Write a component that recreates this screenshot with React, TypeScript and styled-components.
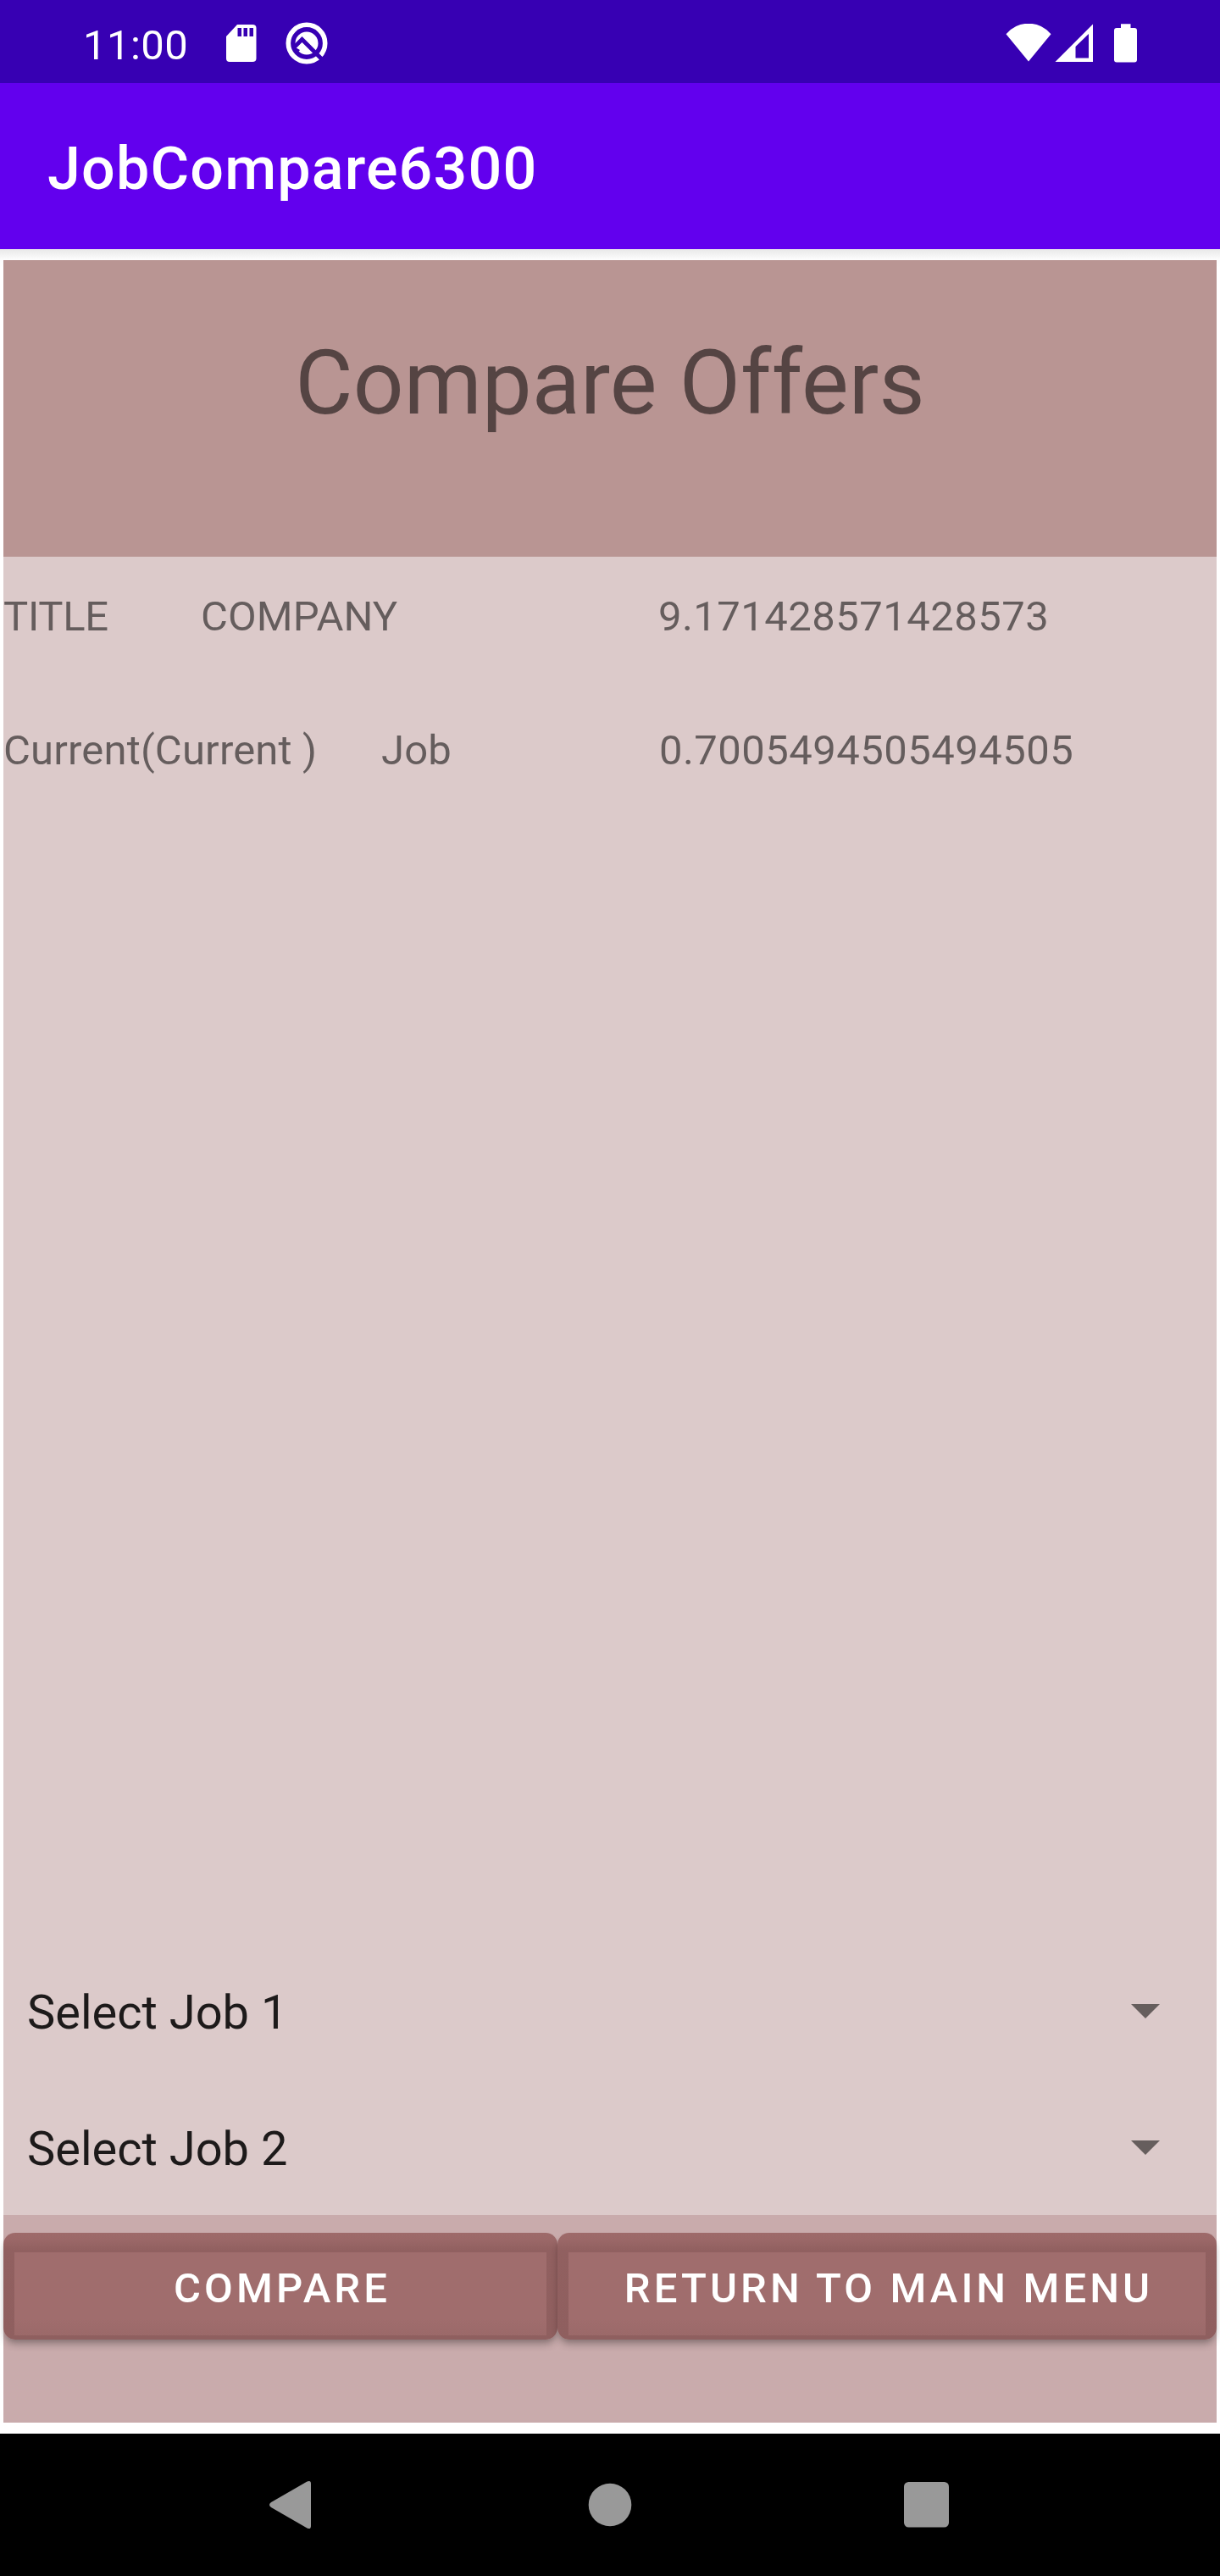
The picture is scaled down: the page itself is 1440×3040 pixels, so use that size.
import React from "react";
import styled, { createGlobalStyle } from "styled-components";

const GlobalStyle = createGlobalStyle`
  * { box-sizing: border-box; }
  body { margin: 0; background: #fff; }
  #root { font-family: Roboto, "Noto Sans", sans-serif; }
`;

const Screen = styled.div`
  width: 1440px;
  height: 3040px;
  display: flex;
  flex-direction: column;
  background: #fff;
  overflow: hidden;
`;

const StatusBar = styled.div`
  flex: none;
  height: 98px;
  padding: 4px 97px 0 98px;
  display: flex;
  align-items: center;
  background: #3700b3;
  color: #fff;
`;

const Clock = styled.span`
  width: 168px;
  padding-top: 5px;
  font-size: 49px;
  line-height: 57px;
  letter-spacing: 0.45px;
`;

const StatusIcons = styled.div`
  display: flex;
  align-items: center;
  height: 50px;
`;

const RightIcons = styled(StatusIcons)`
  margin-left: auto;
`;

const Icon = styled.svg<{ $ml?: number }>`
  display: block;
  flex: none;
  margin-left: ${(p) => p.$ml ?? 0}px;
`;

const Toolbar = styled.header`
  flex: none;
  height: 196px;
  padding: 6px 56px 0;
  display: flex;
  align-items: center;
  background: #6200ee;
  color: #fff;
`;

const AppTitle = styled.h1`
  margin: 0;
  font-size: 70px;
  font-weight: 500;
  line-height: 82px;
  letter-spacing: 0.0165em;
`;

const Content = styled.main`
  flex: 1;
  display: flex;
  flex-direction: column;
  padding: 13px 4px;
  background: linear-gradient(#e8e8e8, #fcfcfc 12px, #fff 22px);
`;

const Heading = styled.section`
  height: 350px;
  padding-top: 84px;
  background: #b99593;
  color: rgba(0, 0, 0, 0.54);
  font-size: 105px;
  line-height: 123px;
  letter-spacing: 0.1px;
  text-align: center;
`;

const OffersPanel = styled.section`
  flex: 1;
  display: flex;
  flex-direction: column;
  background: #dccaca;
`;

const OfferRow = styled.div`
  height: 158px;
  padding-top: 42px;
  display: flex;
  color: rgba(0, 0, 0, 0.54);
  font-size: 49px;
  line-height: 57px;
  white-space: pre;
`;

const OfferCell = styled.span<{ $w: number; $tracking?: number }>`
  flex: none;
  width: ${(p) => p.$w}px;
  letter-spacing: ${(p) => p.$tracking ?? 0.1}px;
`;

const OfferScore = styled.span`
  letter-spacing: 0.45px;
`;

const Selectors = styled.div`
  margin-top: auto;
`;

const Spinner = styled.div`
  height: 161px;
  padding: 2px 67px 0 28px;
  display: flex;
  align-items: center;
  justify-content: space-between;
  color: rgba(0, 0, 0, 0.87);
  font-size: 56px;
  line-height: 66px;
`;

const SpinnerLabel = styled.span`
  padding-top: 3px;
`;

const Actions = styled.section`
  height: 245px;
  padding-top: 21px;
  display: flex;
  align-items: flex-start;
  background: #c9abac;
`;

const ActionButton = styled.button<{ $w: number }>`
  width: ${(p) => p.$w}px;
  height: 126px;
  padding: 0;
  border: 0;
  border-radius: 14px;
  background: linear-gradient(#9e6a6a 0, #9b6868 8px, #916060 20px, #8f5f5f 100%);
  box-shadow: 0 7px 10px -2px rgba(0, 0, 0, 0.3), 0 2px 4px rgba(0, 0, 0, 0.05);
  color: #fff;
  font-family: inherit;
  font-size: 49px;
  font-weight: 500;
  line-height: 57px;
  letter-spacing: 4.1px;
`;

const ButtonFace = styled.span`
  display: flex;
  align-items: center;
  justify-content: center;
  height: 98px;
  margin: 23px 13px 5px;
  padding: 0 0 13px 4px;
  background: linear-gradient(#a06d6d 80%, #9b6969);
`;

const NavBar = styled.nav`
  flex: none;
  height: 168px;
  padding-left: 317px;
  display: flex;
  align-items: center;
  background: #000;
`;

const offers = [
  { title: "TITLE", company: "COMPANY", score: "9.171428571428573", widths: [233, 540], tracking: -0.3 },
  { title: "Current(Current )", company: "Job", score: "0.7005494505494505", widths: [446, 328], tracking: 0.17 },
];

const selectors = ["Select Job 1", "Select Job 2"];

const actions = [
  { label: "COMPARE", width: 654 },
  { label: "RETURN TO MAIN MENU", width: 778 },
];

export default function App() {
  return (
    <>
      <GlobalStyle />
      <Screen>
        <StatusBar>
          <Clock>11:00</Clock>
          <StatusIcons>
            <Icon width="38" height="46" viewBox="0 0 38 46" fill="#fff" fillRule="evenodd">
              <path d="M14 1H32Q36.500 1 36.500 5V41Q36.500 45 32 45H5Q1 45 1 41V15ZM14.500 5V15H19V5ZM21.500 5V15H26V5ZM28.500 5V15H33V5Z" />
            </Icon>
            <Icon $ml={32} width="52" height="52" viewBox="0 0 52 52" fill="none">
              <circle cx="26" cy="26" r="21.700" stroke="#fff" strokeWidth="5.600" />
              <circle cx="26" cy="26" r="13.500" fill="#fff" />
              <path d="M11 31L20.500 21.500L44 45" stroke="#3700b3" strokeWidth="4.800" />
              <path d="M11 30L18 34L14 39Z" fill="#3700b3" />
            </Icon>
          </StatusIcons>
          <RightIcons>
            <Icon width="54" height="46" viewBox="0 0 54 46" fill="#fff">
              <path d="M.5 12.300A34.200 34.200 0 0 1 53.500 12.300L27 44.500Z" />
            </Icon>
            <Icon $ml={4} width="46" height="46" viewBox="0 0 46 46" fill="#fff" fillRule="evenodd">
              <path d="M.5 45L45 .5V45ZM24.500 27V40.500H40V12Z" />
            </Icon>
            <Icon $ml={24} width="28" height="46" viewBox="0 0 28 46" fill="#fff">
              <path d="M8 0.300H19.500V5H24Q27 5 27 8V42.500Q27 45.500 24 45.500H3Q0 45.500 0 42.500V8Q0 5 3 5H8Z" />
            </Icon>
          </RightIcons>
        </StatusBar>
        <Toolbar>
          <AppTitle>JobCompare6300</AppTitle>
        </Toolbar>
        <Content>
          <Heading>Compare Offers</Heading>
          <OffersPanel>
            {offers.map((o) => (
              <OfferRow key={o.title}>
                <OfferCell $w={o.widths[0]} $tracking={o.tracking}>{o.title}</OfferCell>
                <OfferCell $w={o.widths[1]}>{o.company}</OfferCell>
                <OfferScore>{o.score}</OfferScore>
              </OfferRow>
            ))}
            <Selectors>
              {selectors.map((s) => (
                <Spinner key={s}>
                  <SpinnerLabel>{s}</SpinnerLabel>
                  <svg width="34" height="17" viewBox="0 0 34 17">
                    <path d="M0 0H34L17 17Z" fill="#665e5d" />
                  </svg>
                </Spinner>
              ))}
            </Selectors>
          </OffersPanel>
          <Actions>
            {actions.map((a) => (
              <ActionButton key={a.label} $w={a.width}>
                <ButtonFace>{a.label}</ButtonFace>
              </ActionButton>
            ))}
          </Actions>
        </Content>
        <NavBar>
          <Icon width="50" height="58" viewBox="0 0 50 58" fill="#999">
            <path d="M45.500 1.500Q50 -.5 50 4V54Q50 58.500 45.500 56.500L3 32Q-1 29 3 26Z" />
          </Icon>
          <Icon $ml={327} width="52" height="52" viewBox="0 0 52 52" fill="#999">
            <circle cx="26" cy="26" r="25.300" />
          </Icon>
          <Icon $ml={321} width="53" height="54" viewBox="0 0 53 54" fill="#999">
            <rect width="53" height="53.500" rx="5.500" />
          </Icon>
        </NavBar>
      </Screen>
    </>
  );
}
